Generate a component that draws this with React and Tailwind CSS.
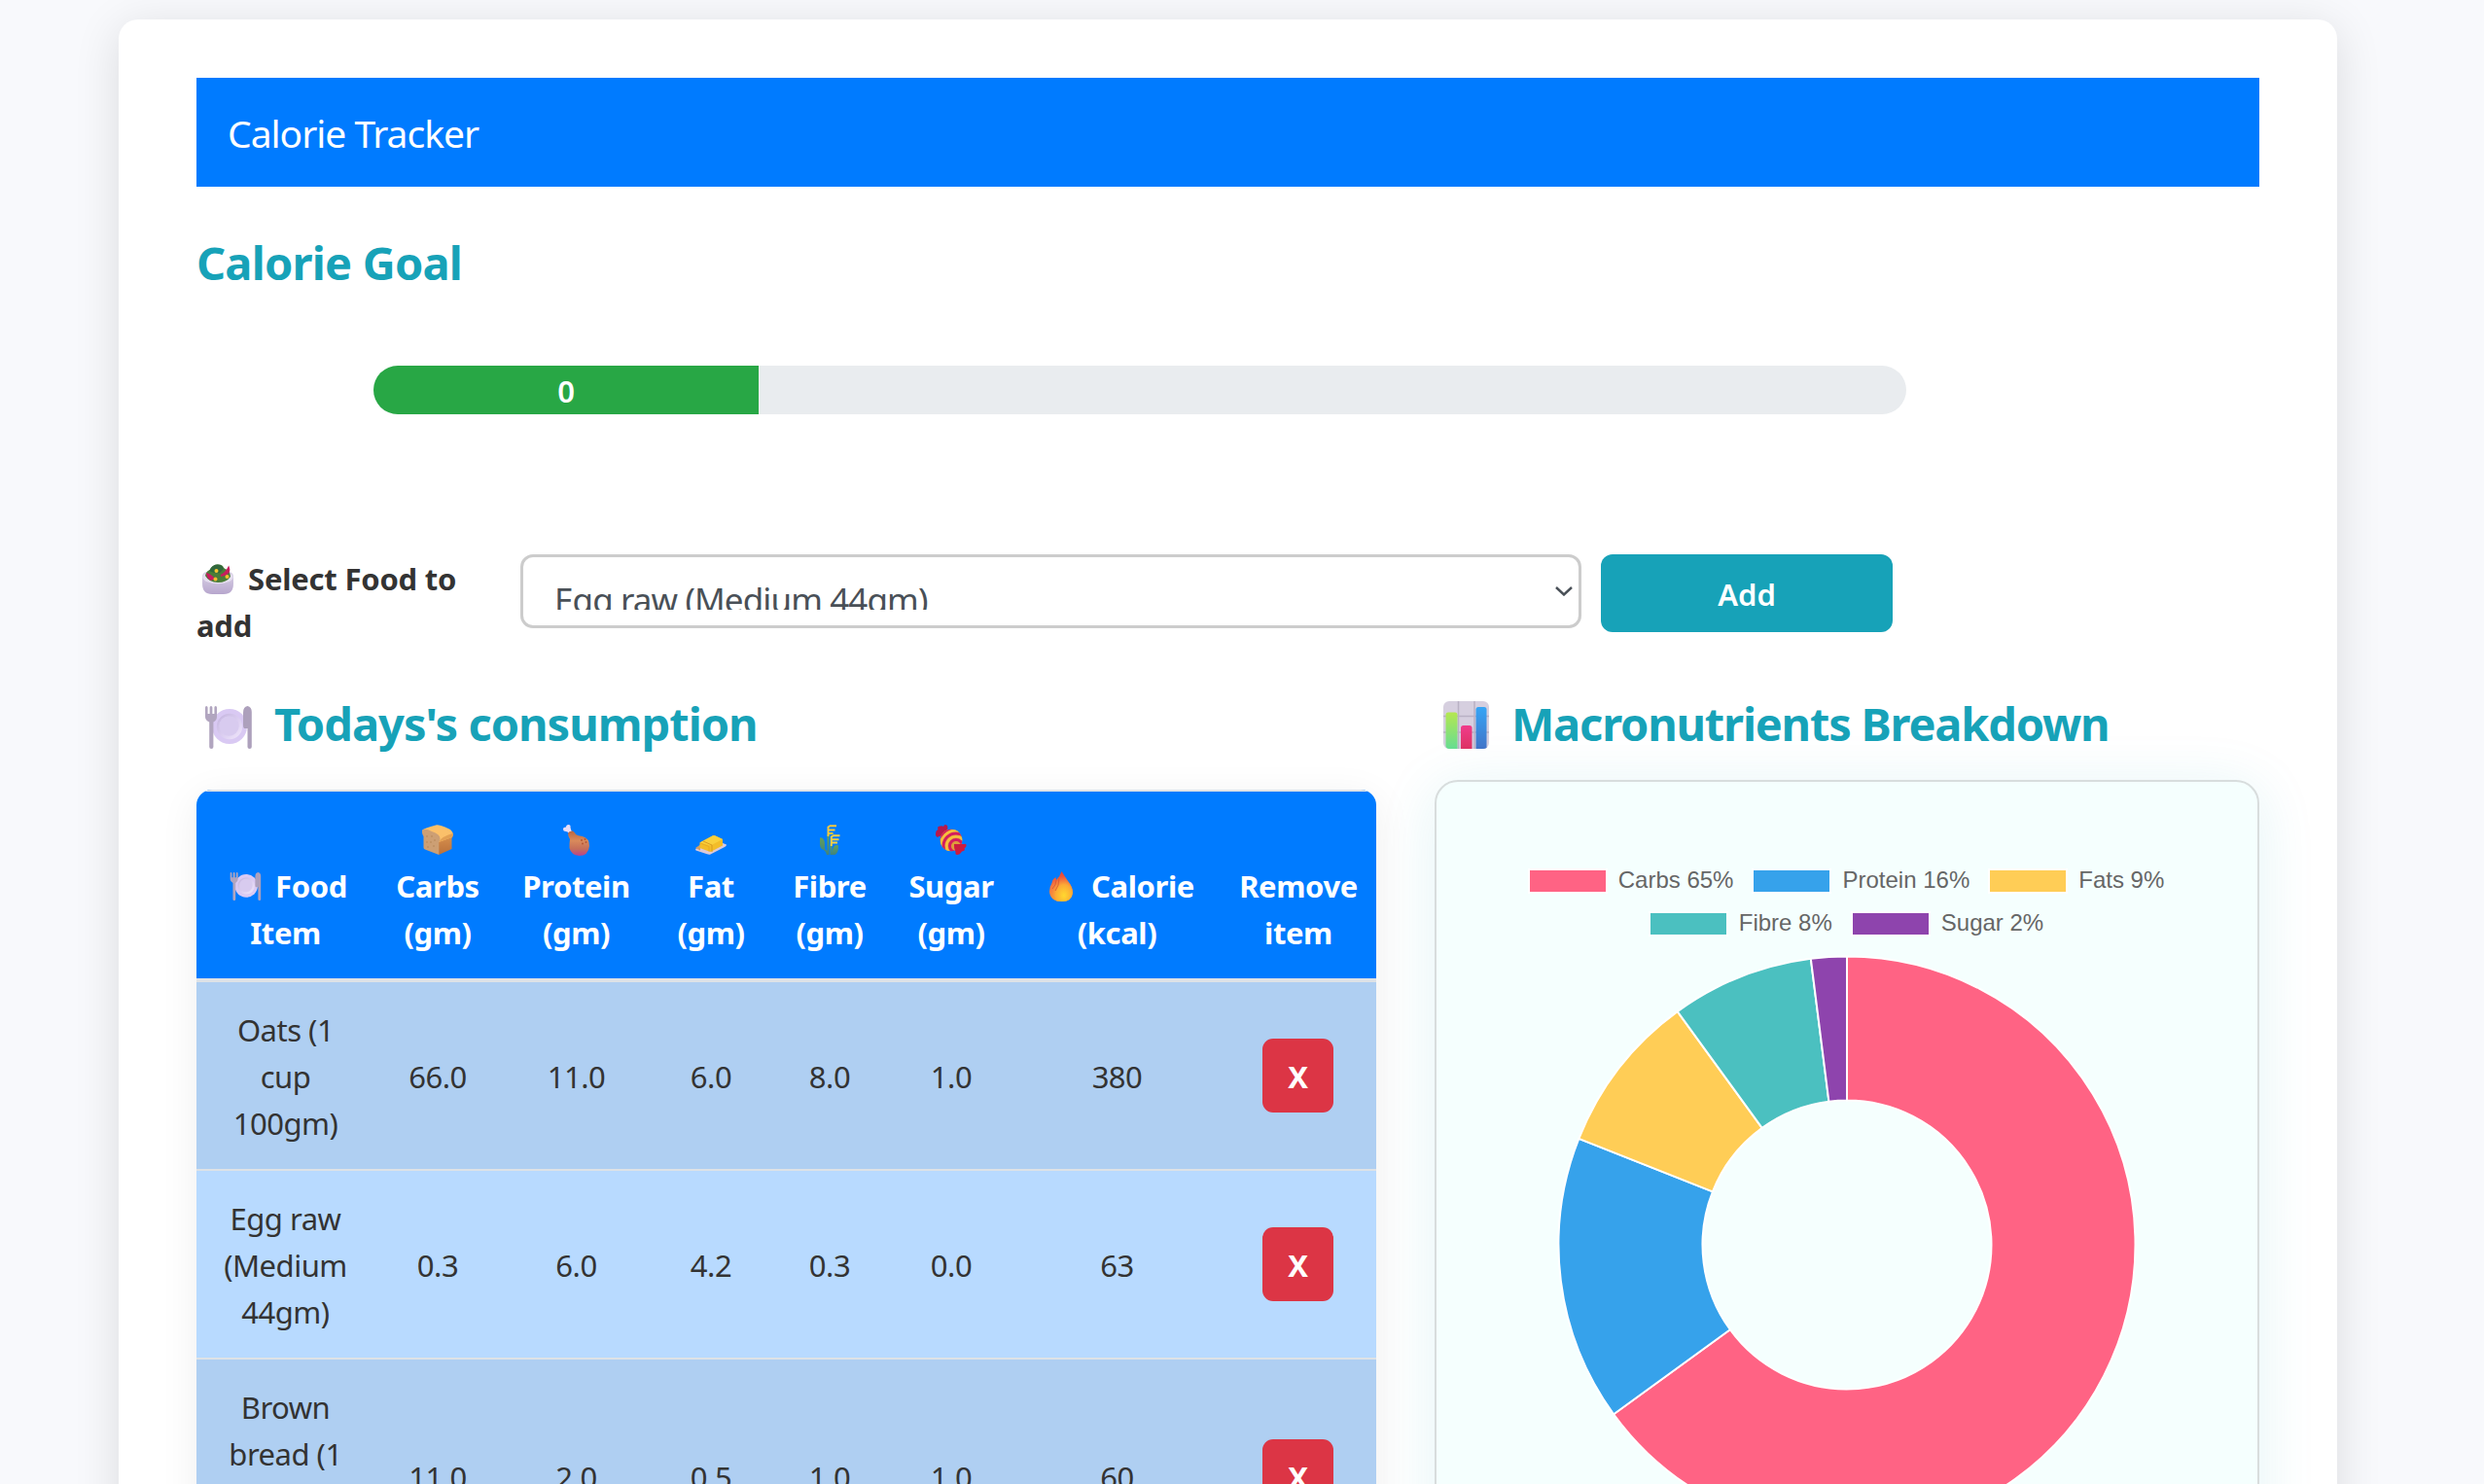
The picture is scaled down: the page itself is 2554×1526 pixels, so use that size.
import React from "react";

/* ---------- Emoji drawings ---------- */

function PlateIcon({ className }) {
  return (
    <svg viewBox="0 0 48 44" className={className}>
      <defs>
        <linearGradient id="plateIn" x1="0" y1="0" x2="1" y2="1">
          <stop offset="0" stopColor="#c3b3dd" />
          <stop offset="0.55" stopColor="#dccff1" />
          <stop offset="1" stopColor="#f1e8fb" />
        </linearGradient>
      </defs>
      <circle cx="25" cy="21" r="18" fill="#d9c9f3" />
      <circle cx="25" cy="21" r="13.2" fill="url(#plateIn)" />
      <circle cx="24.5" cy="20.5" r="10.2" fill="#d8cbef" />
      <path d="M0 1.5Q0 0 1.2 0T2.6 1.5V8H4.6V1.500Q4.700 0 6 0T7.400 1.500V8H9.400V1.500Q9.400 0 10.700 0T12 1.500V11Q12 14.500 8.400 16.500V42Q8.400 44 6.300 44T4.200 42V16.500Q0 14.500 0 11Z" fill="#b1a5bf" />
      <path d="M43.500 0Q47.800 1 47.800 6V42Q47.800 44 45.700 44T43.500 42V23H40.200Q39 23 39 20V7Q39 0.500 43.500 0Z" fill="#ada0bc" />
    </svg>
  );
}

function SaladIcon({ className }) {
  return (
    <svg viewBox="0 0 32 31" className={className}>
      <defs>
        <linearGradient id="bowl" x1="0" y1="0" x2="0" y2="1">
          <stop offset="0" stopColor="#dcd5e8" />
          <stop offset="1" stopColor="#b7a6cd" />
        </linearGradient>
      </defs>
      <path d="M0 13Q0 9 4 8H28Q32 9 32 13V20Q32 31 22 31H10Q0 31 0 20Z" fill="url(#bowl)" />
      <ellipse cx="16" cy="13.500" rx="15.500" ry="6.800" fill="#e6dff0" />
      <path d="M3 12Q4 7 8 6Q11 0 16 .5Q21 0 22 4Q29 7 29 13Q25 19 16 19T3 12Z" fill="#4b7d38" />
      <path d="M7 7Q10 0 16 .5Q21 1 22 5L18 9Q13 10 7 7Z" fill="#31683c" />
      <path d="M4 9Q9 10 13 15L9 17Q4 14 4 9Z" fill="#c81d5e" />
      <path d="M27 4Q29 10 19 12Q24 10 27 4Z" fill="#df2668" stroke="#c81d5e" strokeWidth="2" />
      <circle cx="14.500" cy="7" r="2" fill="#f8c530" />
      <circle cx="13.500" cy="15.500" r="2" fill="#f8b92e" />
      <circle cx="25.500" cy="13" r="2" fill="#f5c22f" />
    </svg>
  );
}

function ChartIcon({ className }) {
  return (
    <svg viewBox="0 0 47 49" className={className}>
      <defs>
        <linearGradient id="cg" x1="0" y1="0" x2="0" y2="1">
          <stop offset="0" stopColor="#b5e750" />
          <stop offset="1" stopColor="#66dd92" />
        </linearGradient>
        <linearGradient id="cb" x1="0" y1="0" x2="0" y2="1">
          <stop offset="0" stopColor="#36a5f5" />
          <stop offset="1" stopColor="#4174c8" />
        </linearGradient>
        <linearGradient id="cr" x1="0" y1="0" x2="0" y2="1">
          <stop offset="0" stopColor="#f03c8b" />
          <stop offset="1" stopColor="#dd3263" />
        </linearGradient>
      </defs>
      <rect width="47" height="49" rx="6" fill="#d6cfdf" />
      <path d="M15.500 0V49M32 0V49M0 15.500H47M0 32H47" stroke="#b9b1c4" strokeWidth="1.500" />
      <path d="M2.500 14Q2.500 11.500 5 11.500H12Q14.500 11.500 14.500 14V49H6Q3 49 2.500 46Z" fill="url(#cg)" />
      <path d="M18 27.500Q18 25 20.500 25H27Q29.500 25 29.500 27.500V49H18Z" fill="url(#cr)" />
      <path d="M33.500 8.500Q33.500 6 36 6H42Q44.500 6 44.500 8.500V48Q43 49 41 49H33.500Z" fill="url(#cb)" />
    </svg>
  );
}

function BreadIcon({ className }) {
  return (
    <svg viewBox="0 0 32 31" className={className}>
      <defs>
        <linearGradient id="breadSide" x1="0" y1="0" x2="0" y2="1">
          <stop offset="0" stopColor="#dc9550" />
          <stop offset="1" stopColor="#b9703a" />
        </linearGradient>
      </defs>
      <path d="M17 13L31.500 8Q32 13 30.500 14V25L17 31Z" fill="url(#breadSide)" />
      <path d="M0 6Q1 4 15 0.300Q18 0 28 4.500Q32 6.500 31.500 11Q31 13 29.500 13.500L17 18Z" fill="#fbc06a" />
      <path d="M17 18Q20 12 31.500 9Q32 13 29.500 13.500Z" fill="#e3a053" />
      <path d="M0 6Q3 3 10 7Q19 10 18.500 15Q18 17 17.300 18V31L3 25.500Q1.500 25 1.500 23.500V12Q-.5 9 0 6Z" fill="#cc9f74" />
      <g fill="#b58556">
        <circle cx="5" cy="12" r=".8" /><circle cx="10" cy="12" r=".8" /><circle cx="13" cy="16" r=".8" />
        <circle cx="5" cy="18" r=".8" /><circle cx="9" cy="18" r=".8" /><circle cx="6" cy="23" r=".8" />
        <circle cx="12" cy="22" r=".8" />
      </g>
    </svg>
  );
}

function DrumstickIcon({ className }) {
  return (
    <svg viewBox="0 0 27 32" className={className}>
      <defs>
        <linearGradient id="drum" x1="0" y1="0" x2="0" y2="1">
          <stop offset="0" stopColor="#b66743" />
          <stop offset="0.4" stopColor="#d98a5b" />
          <stop offset="0.72" stopColor="#c66f59" />
          <stop offset="1" stopColor="#b8448e" />
        </linearGradient>
      </defs>
      <path d="M0 4.500Q0 2.500 3 2.500Q3 0 5.500 0Q8 0 7.500 3Q8 6 10 9L7 10Q5 7 3 7Q0 7 0 4.500Z" fill="#e8dcf7" />
      <path d="M5 9Q6 6 10 6.500Q12.500 8 13 10Q15 11.500 20 12Q27 14 27 22Q26 32 16.500 32Q8 31 6.500 24Q6.500 18 7 15Q5 12 5 9Z" fill="url(#drum)" />
      <g fill="#b55635">
        <circle cx="19" cy="16" r="1" /><circle cx="22.500" cy="15" r="1" /><circle cx="23.500" cy="18" r="1" /><circle cx="20" cy="19.500" r="1" />
      </g>
    </svg>
  );
}

function ButterIcon({ className }) {
  return (
    <svg viewBox="0 0 32 20" className={className}>
      <path d="M0 14L18 4L32 9.500Q32 11 30 12L15 19.700Q13.500 20 12 19.300L0.500 15.500Z" fill="#dcc9d8" />
      <path d="M0 13L5 9.500L5 15.500Z" fill="#d09d63" />
      <path d="M4.500 7.500L18 .3Q19 0 20 .3L28 4V10.500L15.500 17L4.500 13Z" fill="#f3bd29" />
      <path d="M4.500 7.500L18 .3Q19 0 20 .3L28 4L15.500 10.500Z" fill="#f9d03c" />
      <path d="M8 6L17 10V17" stroke="#d99b20" strokeWidth="1" fill="none" />
      <path d="M5 8L14 11.500V16.500" stroke="#e5a822" strokeWidth=".8" fill="none" />
    </svg>
  );
}

function GrainIcon({ className }) {
  return (
    <svg viewBox="0 0 21 31" className={className}>
      <defs>
        <linearGradient id="leaf" x1="0" y1="0" x2="0" y2="1">
          <stop offset="0" stopColor="#68a457" />
          <stop offset="1" stopColor="#3d8281" />
        </linearGradient>
      </defs>
      <path d="M0 14Q0 13 2 13.500Q5 15 5 20V25L7.500 27V10H9.500V31H7Q6 27 4 26Q0 25 0 20Z" fill="url(#leaf)" />
      <path d="M10.500 20H12.500V29Q13.500 21 17 21Q19 20 19 23Q19 29 15.500 31H10.500Z" fill="url(#leaf)" />
      <path d="M8.500 12V2.500L10.500 1.200H17M9 5.500H15.500M9 9H13.500" stroke="#f6c93f" strokeWidth="1.900" fill="none" />
      <path d="M11.800 22V12.500L14 11.200H20.500M12 15.300H19.500M12 18.500H18" stroke="#fad043" strokeWidth="1.900" fill="none" />
    </svg>
  );
}

function CandyIcon({ className }) {
  return (
    <svg viewBox="0 0 32 31" className={className}>
      <defs>
        <clipPath id="candyBall"><circle cx="16" cy="16" r="11.300" /></clipPath>
      </defs>
      <path d="M0 9Q0 6 2.500 5Q1 1 5 1.500Q7 1 8 2Q9 -1 11.500 .5Q13 2 12 5L7 12Q4 11 2 13Q-.5 12 0 9Z" fill="#b5194d" />
      <circle cx="16" cy="16" r="11.300" fill="#dd9c3c" />
      <g clipPath="url(#candyBall)" fill="none" stroke="#d51c5f" strokeWidth="3">
        <circle cx="21" cy="22" r="6.500" />
        <circle cx="21" cy="22" r="13" />
        <circle cx="21" cy="22" r="19" />
      </g>
      <g clipPath="url(#candyBall)" fill="none" stroke="#f7bd3d" strokeWidth="2.600">
        <circle cx="21" cy="22" r="9.800" />
        <circle cx="21" cy="22" r="16" />
      </g>
      <path d="M19 20H29Q32 19 31.500 22Q31 24 29.500 24Q31 27 27 27.500Q25 31 22 31Q20 31 20.500 28Q18.500 24 19 20Z" fill="#cd1c3f" />
    </svg>
  );
}

function FireIcon({ className }) {
  return (
    <svg viewBox="0 0 24 31" className={className}>
      <defs>
        <linearGradient id="fireOut" x1="0" y1="0" x2="0" y2="1">
          <stop offset="0" stopColor="#e64239" />
          <stop offset="0.5" stopColor="#f57842" />
          <stop offset="1" stopColor="#f79536" />
        </linearGradient>
        <radialGradient id="fireIn" cx=".62" cy=".8" r=".65">
          <stop offset="0" stopColor="#ffd82f" />
          <stop offset="0.55" stopColor="#fcab35" />
          <stop offset="1" stopColor="#f47641" stopOpacity="0" />
        </radialGradient>
      </defs>
      <path d="M12.500 0Q15 4 19 10Q24 16 24 22Q23 31 13 31Q1 31 0 21Q0 16 2.500 12Q3 8 6.500 6L7 9Q11 5 12.500 0Z" fill="url(#fireOut)" />
      <path d="M12.500 0Q15 4 19 10Q24 16 24 22Q23 31 13 31Q1 31 0 21Q0 16 2.500 12Q3 8 6.500 6L7 9Q11 5 12.500 0Z" fill="url(#fireIn)" />
      <path d="M7 9Q7 14 3 18M10 7Q10 15 6 20" stroke="#d95b33" strokeWidth=".9" fill="none" />
    </svg>
  );
}

/* ---------- Data ---------- */

const columns = [
  { w: "w-[183px]", icon: <PlateIcon className="w-[33px] h-[29px]" />, inline: true, a: "Food", b: "Item" },
  { w: "w-[130px]", icon: <BreadIcon className="w-[32px] h-[31px]" />, a: "Carbs", b: "(gm)" },
  { w: "w-[155px]", icon: <DrumstickIcon className="w-[27px] h-[32px]" />, a: "Protein", b: "(gm)" },
  { w: "w-[122px]", icon: <ButterIcon className="w-[32px] h-[20px] mt-[11px]" />, a: "Fat", b: "(gm)" },
  { w: "w-[122px]", icon: <GrainIcon className="w-[21px] h-[31px]" />, a: "Fibre", b: "(gm)" },
  { w: "w-[128px]", icon: <CandyIcon className="w-[32px] h-[31px]" />, a: "Sugar", b: "(gm)" },
  { w: "w-[213px]", icon: <FireIcon className="w-[24px] h-[31px]" />, inline: true, a: "Calorie", b: "(kcal)" },
  { w: "w-[160px]", a: "Remove", b: "item" },
];

const rows = [
  { name: ["Oats (1", "cup", "100gm)"], values: ["66.0", "11.0", "6.0", "8.0", "1.0", "380"] },
  { name: ["Egg raw", "(Medium", "44gm)"], values: ["0.3", "6.0", "4.2", "0.3", "0.0", "63"] },
  { name: ["Brown", "bread (1", "slice", "28gm)"], values: ["11.0", "2.0", "0.5", "1.0", "1.0", "60"] },
];

const slices = [
  { label: "Carbs 65%", value: 65, color: "#ff6384" },
  { label: "Protein 16%", value: 16, color: "#36a2eb" },
  { label: "Fats 9%", value: 9, color: "#ffcd56" },
  { label: "Fibre 8%", value: 8, color: "#4bc0c0" },
  { label: "Sugar 2%", value: 2, color: "#8e44ad" },
];

function Doughnut() {
  const R = 296.5;
  const r = 148.5;
  const at = (radius, pct) => {
    const t = (pct / 100) * Math.PI * 2;
    return `${300 + radius * Math.sin(t)} ${300 - radius * Math.cos(t)}`;
  };
  let start = 0;
  return (
    <svg viewBox="0 0 600 600" className="w-[600px] h-[600px] shrink-0">
      {slices.map((s) => {
        const from = start;
        const to = start + s.value;
        start = to;
        const big = s.value > 50 ? 1 : 0;
        return (
          <path
            key={s.label}
            d={`M${at(R, from)}A${R} ${R} 0 ${big} 1 ${at(R, to)}L${at(r, to)}A${r} ${r} 0 ${big} 0 ${at(r, from)}Z`}
            fill={s.color}
            stroke="#fff"
            strokeWidth="2"
            strokeLinejoin="bevel"
          />
        );
      })}
    </svg>
  );
}

function LegendItem({ item }) {
  return (
    <div className="flex items-center gap-[11px]">
      <span className="w-[82px] h-[26px] border-2 border-white" style={{ backgroundColor: item.color }} />
      <span className="relative -top-px whitespace-nowrap">{item.label}</span>
    </div>
  );
}

function ConsumptionTable() {
  return (
    <div className="mt-[38px] rounded-t-[16px] overflow-hidden text-[31px] leading-[48px] text-center">
      <div className="flex h-[198px] bg-[#007bff] border-t-2 border-b-4 border-[#dee2e6] text-white font-bold tracking-[-0.4px] pt-[25px]">
        {columns.map((c) => (
          <div key={c.a} className={`${c.w} shrink-0`}>
            <div className="h-[48px] flex justify-center pt-[9px]">{!c.inline && c.icon}</div>
            <div className="h-[48px] flex justify-center items-center whitespace-nowrap">
              {c.inline && <span className="w-[44px] mr-[9px] flex justify-center">{c.icon}</span>}
              {c.a}
            </div>
            <div>{c.b}</div>
          </div>
        ))}
      </div>
      {rows.map((row, i) => (
        <div
          key={row.name[0]}
          className={`flex items-center border-b-2 border-[#dee2e6] pt-[25px] pb-[23px] text-[#333] tracking-[-0.5px] ${i % 2 ? "bg-[#b8daff]" : "bg-[#afcff2]"}`}
        >
          <div className="w-[183px] shrink-0">
            {row.name.map((line) => (
              <div key={line} className="whitespace-nowrap">{line}</div>
            ))}
          </div>
          {row.values.map((v, k) => (
            <div key={k} className={`${columns[k + 1].w} shrink-0`}>{v}</div>
          ))}
          <div className="w-[160px] shrink-0 flex justify-center pr-[2px]">
            <button className="-mt-[2px] w-[73px] h-[76px] rounded-[11px] bg-[#dc3545] text-white font-bold pt-[2px] pl-[1px]">X</button>
          </div>
        </div>
      ))}
    </div>
  );
}

export default function App() {
  return (
    <div className="h-[1526px] w-[2554px] overflow-hidden bg-[#f8f9fc] pt-[20px] font-['Noto_Sans','Open_Sans',sans-serif]">
      <main className="ml-[122px] w-[2281px] h-[1700px] rounded-[20px] bg-white px-[80px] pt-[60px] shadow-[0_8px_48px_rgba(0,0,0,0.12)]">
        <nav className="h-[112px] bg-[#007bff] flex items-center px-[32px] pt-[2px] text-white text-[39px] tracking-[-1px]">
          Calorie Tracker
        </nav>

        <h2 className="mt-[48px] h-[60px] leading-[60px] text-[47px] font-bold text-[#17a2b8] tracking-[-0.8px]">Calorie Goal</h2>

        <div className="mt-[76px] ml-[182px] w-[1576px] h-[50px] rounded-[25px] overflow-hidden bg-[#e9ecef]">
          <div className="w-[396px] h-full bg-[#28a745] text-white text-[31px] font-semibold text-center leading-[52px]">0</div>
        </div>

        <div className="mt-[144px] flex items-start h-[98px]">
          <div className="w-[333px] pt-[1px] text-[31px] leading-[48px] font-bold text-[#333] tracking-[-0.2px]">
            <div className="flex items-center">
              <span className="w-[53px] pl-[6px]"><SaladIcon className="w-[32px] h-[31px]" /></span>
              Select Food to
            </div>
            <div>add</div>
          </div>
          <div className="w-[1091px] h-[76px] border-[3px] border-[#ccc] rounded-[13px] bg-white flex justify-between">
            <div className="h-[54px] overflow-hidden pt-[20px] pl-[32px] text-[35px] leading-[48px] text-[#495057] tracking-[-0.9px] whitespace-nowrap">
              Egg raw (Medium 44gm)
            </div>
            <svg viewBox="0 0 18 10" className="w-[18px] h-[10px] mt-[30px] mr-[6px]" fill="none" stroke="#495057" strokeWidth="2.400">
              <path d="M1 1L9 8.500L17 1" />
            </svg>
          </div>
          <button className="ml-[20px] w-[300px] h-[80px] rounded-[12px] bg-[#17a2b8] text-white text-[31px] font-semibold pt-[3px]">
            Add
          </button>
        </div>

        <div className="mt-[46px] flex gap-[60px]">
          <section className="w-[1213px] shrink-0">
            <h2 className="h-[60px] flex items-center text-[47px] font-bold text-[#17a2b8] tracking-[-1px]">
              <PlateIcon className="w-[48px] h-[44px] ml-[9px] mr-[23px] mt-[8px]" />
              Todays's consumption
            </h2>
            <div className="rounded-t-[16px] shadow-[0_8px_40px_rgba(0,0,0,0.07)]">
              <ConsumptionTable />
            </div>
          </section>

          <section className="w-[848px] shrink-0">
            <h2 className="h-[60px] flex items-center text-[47px] font-bold text-[#17a2b8] tracking-[-1.2px]">
              <ChartIcon className="w-[47px] h-[49px] ml-[9px] mr-[23px] mt-[3px]" />
              Macronutrients Breakdown
            </h2>
            <div className="mt-[28px] h-[900px] rounded-[24px] border-2 border-[#d8dddd] bg-[#f5fffe] shadow-[0_8px_60px_rgba(23,162,184,0.12)] flex flex-col items-center pt-[89px] text-[24px] leading-[26px] text-[#666] font-['Liberation_Sans',Arial,sans-serif]">
              <div className="mr-[2px] flex gap-[19px]">
                {slices.slice(0, 3).map((s) => <LegendItem key={s.label} item={s} />)}
              </div>
              <div className="mt-[18px] mr-[2px] flex gap-[19px]">
                {slices.slice(3).map((s) => <LegendItem key={s.label} item={s} />)}
              </div>
              <div className="mt-[17px]">
                <Doughnut />
              </div>
            </div>
          </section>
        </div>
      </main>
    </div>
  );
}
